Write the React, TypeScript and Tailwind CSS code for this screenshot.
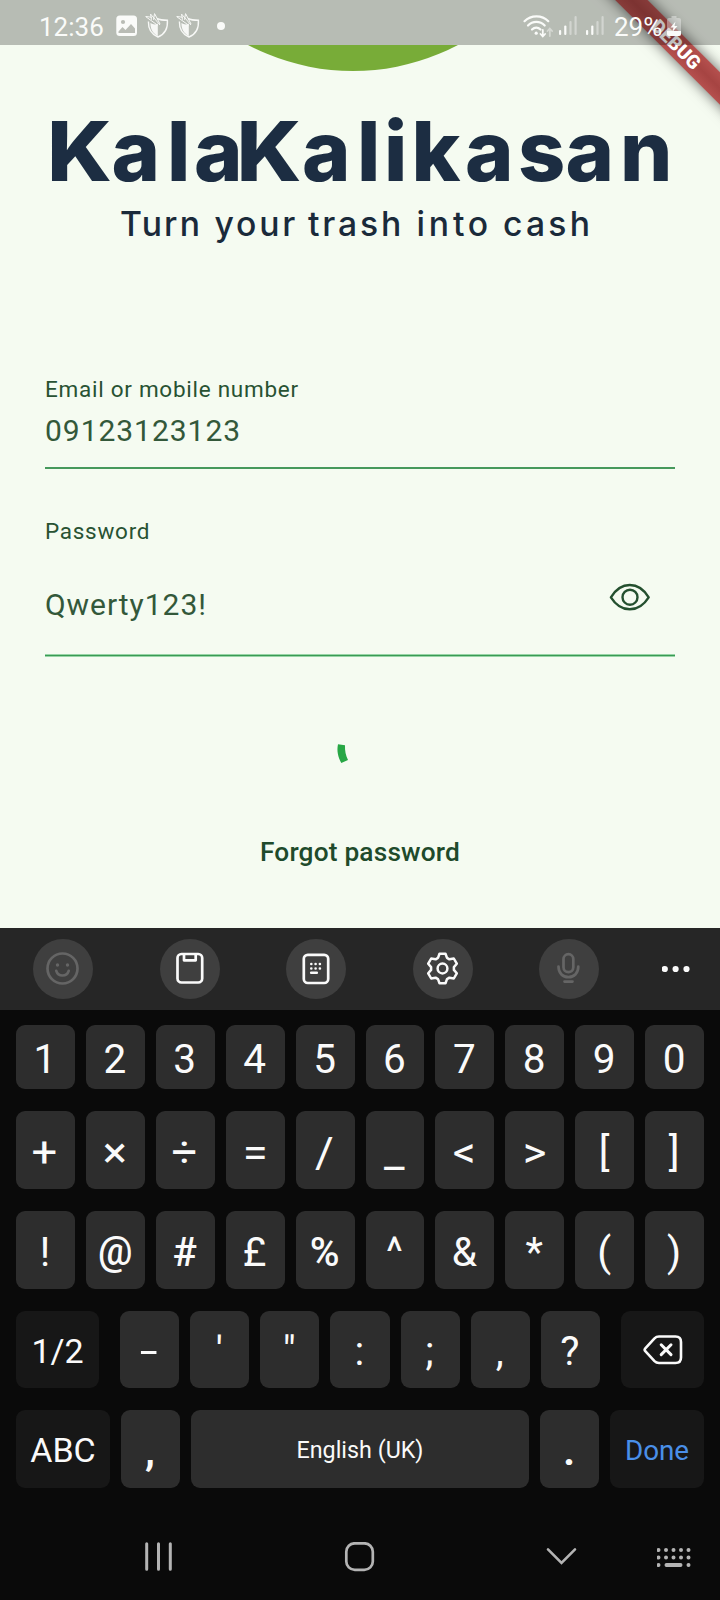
import React from "react";

const shieldIcon = (
  <svg width="24" height="26" viewBox="0 0 24 26" fill="none" stroke="#f7f8f6" strokeWidth="1.4">
    <path d="M12 5.500c2.800 1.400 6 1.800 10.400 1.800 .6 8.700-3.200 14.200-9.400 16.700-6-2.500-9.800-7.500-9.600-15.500" />
    <path d="M12.800 10.500v12.500c-4.800-2.500-7.400-6.500-7.400-13 2.500 1.500 5 2 7.400.5z" fill="#f7f8f6" stroke="none" />
    <path d="M.5 3.500l12.500 9M5.500 1l9.500 11M9.500 .5l5.500 10.500M1 3.500l6 .8M5.500 1.200l1 5.500M9.500 .8l-1 6" strokeWidth="1" />
  </svg>
);

function Signal() {
  return (
    <svg width="18" height="20" viewBox="0 0 18 20" fill="#fafbf9">
      <rect x="0" y="14" width="2.200" height="5" rx="1" />
      <rect x="5.200" y="9.500" width="2.200" height="9.500" rx="1" />
      <rect x="10.400" y="5" width="2.200" height="14" rx="1" opacity=".4" />
      <rect x="15.500" y="0" width="2.200" height="19" rx="1" opacity=".4" />
    </svg>
  );
}

function StatusBar() {
  return (
    <header className="relative z-20 flex h-[45px] shrink-0 items-center bg-black/25 pt-[7px] pl-[39px] text-[26px] leading-[32px] text-[#fafbf9]">
      <span className="mt-[2px] w-[77px]">12:36</span>
      <svg className="mr-[7px]" width="22" height="22" viewBox="0 0 22 22">
        <rect x=".3" y=".5" width="20.700" height="20.500" rx="3.500" fill="#fafbf9" />
        <circle cx="7" cy="7" r="2.100" fill="#b9bcb5" />
        <path d="M2.500 16.500l4-4.500 3 3 5.500-6 4 4.500v4.500h-16.500z" fill="#b9bcb5" />
      </svg>
      <span className="mr-[7px]">{shieldIcon}</span>
      <span>{shieldIcon}</span>
      <span className="ml-[17px] size-[8px] rounded-full bg-[#fafbf9]" />
      <svg className="ml-[297px]" width="32" height="24" viewBox="0 0 32 24" fill="none" stroke="#fafbf9" strokeWidth="2.200" strokeLinecap="round">
        <path d="M2.500 7.200c6.500-6.500 17.500-6.500 23.800 0M6 11.500c4.700-4.800 12-4.800 16.700 0M10 15.500c2.500-2.600 6-2.600 8.500 0" />
        <circle cx="14.200" cy="19.200" r="1.600" fill="#fafbf9" stroke="none" />
        <path d="M20.800 16v6M18.500 20l2.300 2.500 2.300-2.500" strokeWidth="1.800" />
        <path d="M27.800 22v-7M25.500 17l2.300-2.500 2.300 2.500" strokeWidth="1.800" opacity=".45" />
      </svg>
      <span className="ml-[5px]"><Signal /></span>
      <span className="ml-[9px]"><Signal /></span>
      <span className="mt-[2px] ml-[10px] w-[53px] whitespace-nowrap">29%</span>
      <svg width="15" height="21" viewBox="0 0 15 21">
        <path d="M4.500 0h5v2h2.500q2 0 2 2v14q0 2-2 2h-10q-2 0-2-2v-14q0-2 2-2h2.500z" fill="#fff" opacity=".38" />
        <path d="M0 15h14v3q0 2-2 2h-10q-2 0-2-2z" fill="#fafbf9" />
        <path d="M8.500 5.500l-5 6h3l-1.500 5 5.500-6.500h-3z" fill="#fafbf9" />
      </svg>
    </header>
  );
}

function DebugBanner() {
  return (
    <div className="absolute top-[33.200px] left-[575.500px] z-10 flex h-[22.600px] w-[200px] rotate-45 items-center justify-center bg-linear-to-b from-[#b5504e] via-[#a64442] to-[#b5504e] text-[19.100px] leading-none font-black text-white shadow-[0_0_14px_rgba(0,0,0,0.6)]">
      DEBUG
    </div>
  );
}

function Brand() {
  return (
    <svg className="shrink-0" width="720" height="215" viewBox="0 45 720 215" fontFamily="Inter, sans-serif">
      <circle cx="353" cy="-154" r="225" fill="#78ac38" />
      <text y="181" fontSize="82.500" fontWeight="800" fill="#1c2d42">
        <tspan x="47" textLength="65" lengthAdjust="spacingAndGlyphs">K</tspan>
        <tspan x="111.500 167 194">ala</tspan>
        <tspan x="236.500" textLength="65" lengthAdjust="spacingAndGlyphs">K</tspan>
        <tspan x="302 357 384 411.500 465 518 565.500 620">alikasan</tspan>
      </text>
      <text y="236" fontSize="33.700" fontWeight="500" fill="#1a2a3a">
        <tspan x="120" textLength="91">Turn </tspan>
        <tspan x="214.500" textLength="92.500">your </tspan>
        <tspan x="308" textLength="105">trash </tspan>
        <tspan x="416.500" textLength="84.500">into </tspan>
        <tspan x="503" textLength="87">cash</tspan>
      </text>
    </svg>
  );
}

function LoginForm() {
  return (
    <form className="mt-[116px] flex flex-col px-[45px] text-[#285233]">
      <label className="h-[26px] text-[22.500px] leading-[26px] tracking-[0.730px]">Email or mobile number</label>
      <div className="mt-[11px] h-[36px] text-[30px] leading-[36px] tracking-[0.960px] text-[#33583a]">09123123123</div>
      <div className="mt-[18px] h-[2px] bg-[#46995c]" />
      <label className="mt-[49px] h-[26px] text-[22.500px] leading-[26px] tracking-[0.730px]">Password</label>
      <div className="mt-[43px] flex h-[36px] justify-between pr-[24px] text-[30px] leading-[36px] tracking-[0.960px] text-[#33583a]">
        <span>Qwerty123!</span>
        <svg className="-mt-[5px]" width="42" height="30" viewBox="0 0 42 30" fill="none" stroke="#24502f" strokeWidth="2.400" strokeLinejoin="round">
          <path d="M1.900 15.300C7 7 13.500 3 20.800 3s13.800 4 18.900 12.300C34.600 23.300 28 27.300 20.800 27.300S7 23.300 1.900 15.300z" />
          <circle cx="21" cy="15.200" r="7.500" />
        </svg>
      </div>
      <div className="mt-[31px] h-[3px] border-y border-[#97d5a6] bg-[#3a9a54]" />
      <svg className="mx-auto mt-[70px]" width="50" height="50" viewBox="335 727 50 50">
        <path d="M338 744.300L345 745.200C344.800 751 345.700 755 348 760L341.300 763C338 757 336.600 751 338 744.300z" fill="#27a745" />
      </svg>
      <button type="button" className="mx-auto mt-[59px] h-[32px] text-[26.250px] leading-[32px] font-medium tracking-[0.190px] text-[#204a2b]">
        Forgot password
      </button>
    </form>
  );
}

function ToolButton({ children, dim }: { children: React.ReactNode; dim?: boolean }) {
  return (
    <button type="button" className={`size-[60px] shrink-0 rounded-full bg-[#3f3f3f] ${dim ? "text-[#656565]" : "text-[#fafafa]"}`}>
      <svg width="60" height="60" viewBox="0 0 60 60" fill="none" stroke="currentColor" strokeWidth="2.700" strokeLinecap="round" strokeLinejoin="round">
        {children}
      </svg>
    </button>
  );
}

function Toolbar() {
  return (
    <div className="flex h-[82px] shrink-0 items-center gap-[66.500px] bg-[#262626] pl-[33px]">
      <ToolButton dim>
        <circle cx="29.500" cy="29.500" r="15" />
        <path d="M23.300 31.800c1 3.300 3.400 4.700 6.200 4.700s5.200-1.400 6.200-4.700" />
        <circle cx="24.500" cy="26" r="1.700" fill="currentColor" stroke="none" />
        <circle cx="34.500" cy="26" r="1.700" fill="currentColor" stroke="none" />
      </ToolButton>
      <ToolButton>
        <rect x="17.500" y="15" width="24.700" height="28.500" rx="4" />
        <path d="M24 15.500v5.800h11.700v-5.800" />
      </ToolButton>
      <ToolButton>
        <rect x="17.800" y="15.800" width="24.400" height="28.200" rx="4" />
        <path d="M25.300 25h.01M29.600 25h.01M33.900 25h.01M25.300 29.500h.01M29.600 29.500h.01M33.900 29.500h.01M25.200 33.800h5.600" strokeWidth="2.600" />
      </ToolButton>
      <ToolButton>
        <g transform="translate(29.500 29.500)">
          <path d="M-3-14.700H3L4.500-10.600 6.900-9.200 11.300-10 14.300-4.800 11.400-1.400V1.400L14.300 4.800 11.300 10 6.900 9.200 4.500 10.600 3 14.700H-3L-4.500 10.600-6.900 9.200-11.300 10-14.300 4.800-11.400 1.400V-1.400L-14.300-4.800-11.300-10-6.900-9.200-4.500-10.600z" strokeWidth="2.500" />
          <circle r="4.900" strokeWidth="2.500" />
        </g>
      </ToolButton>
      <ToolButton dim>
        <rect x="24.500" y="15.200" width="9.800" height="18" rx="4.900" />
        <path d="M19.500 27.500c0 6.500 4 10.700 9.900 10.700s9.900-4.200 9.900-10.700M25.500 42.600h8" />
      </ToolButton>
      <svg className="-ml-[4px]" width="30" height="8" viewBox="0 0 30 8" fill="#fafafa">
        <circle cx="2.800" cy="4" r="3.100" />
        <circle cx="13.600" cy="4" r="3.100" />
        <circle cx="24.500" cy="4" r="3.100" />
      </svg>
    </div>
  );
}

function Key({ children, className = "" }: { children?: React.ReactNode; className?: string }) {
  return (
    <button type="button" className={`flex items-center justify-center rounded-[9px] bg-[#2d2d2d] pt-[4px] pr-[1px] text-[40.500px] leading-none text-[#fafafa] ${className}`}>
      {children}
    </button>
  );
}

const specialKey =
  "flex items-center justify-center rounded-[9px] bg-[#171717] pt-[2px] text-[34px] leading-none text-[#fafafa]";

function Keyboard() {
  return (
    <section className="flex h-[672px] shrink-0 flex-col bg-[#0a0a0a]">
      <Toolbar />
      <div className="flex flex-col gap-[22px] px-[16px] pt-[15px]">
        <div className="grid h-[64px] grid-cols-10 gap-[11px]">
          {["1", "2", "3", "4", "5", "6", "7", "8", "9", "0"].map((k) => <Key key={k}>{k}</Key>)}
        </div>
        <div className="grid h-[78px] grid-cols-10 gap-[11px]">
          {["+", "×", "÷", "=", "/", "_", "<", ">"].map((k) => (
            <Key key={k}><span className="inline-block scale-x-112 scale-y-105">{k}</span></Key>
          ))}
          {["[", "]"].map((k) => <Key key={k}>{k}</Key>)}
        </div>
        <div className="grid h-[78px] grid-cols-10 gap-[11px]">
          <Key>!</Key>
          <Key className="pb-[2px] font-medium"><span className="inline-block scale-x-95">@</span></Key>
          <Key className="font-medium">#</Key>
          <Key>£</Key>
          <Key className="font-medium">%</Key>
          {["^", "&", "*", "(", ")"].map((k) => <Key key={k}>{k}</Key>)}
        </div>
        <div className="flex h-[77px] justify-between">
          <button type="button" className={`${specialKey} w-[83px]`}>1/2</button>
          <div className="grid w-[480px] grid-cols-7 gap-[11px]">
            <Key><span className="inline-block scale-x-160">-</span></Key>
            {["'", '"', ":", ";", ",", "?"].map((k) => <Key key={k}>{k}</Key>)}
          </div>
          <button type="button" className={`${specialKey} w-[83px]`}>
            <svg className="-mt-[2px]" width="40" height="30" viewBox="0 0 40 30" fill="none" stroke="#fafafa" strokeWidth="2.600" strokeLinecap="round" strokeLinejoin="round">
              <path d="M2.300 13.300L11.500 3.300Q13.300 1.500 16 1.500H32.500Q38 1.500 38 7V22.500Q38 28 32.500 28H16Q13.300 28 11.500 26.200L2.300 16.200Q1 14.750 2.300 13.300z" />
              <path d="M18.200 9.800l9.800 9.800M28 9.800l-9.800 9.800" strokeWidth="3" />
            </svg>
          </button>
        </div>
        <div className="flex h-[78px] gap-[11px]">
          <button type="button" className={`${specialKey} w-[94px]`}>ABC</button>
          <Key className="w-[59px] font-bold">,</Key>
          <button type="button" className="flex flex-1 items-center justify-center rounded-[9px] bg-[#2d2d2d] pt-[4px] text-[23.300px] leading-none text-[#fafafa]">English (UK)</button>
          <Key className="w-[59px] font-bold">.</Key>
          <button type="button" className="flex w-[94px] items-center justify-center rounded-[9px] bg-[#171717] pt-[4px] text-[27.800px] leading-none text-[#4a8fe8]">Done</button>
        </div>
      </div>
      <nav className="mt-[54px] flex h-[30px] items-center pl-[144px] text-[#b4b4b4]">
        <svg width="30" height="30" viewBox="0 0 30 30" stroke="currentColor" strokeWidth="3" strokeLinecap="round">
          <path d="M2.700 1.700v25.500M14.500 1.700v25.500M26.300 1.700v25.500" />
        </svg>
        <svg className="ml-[170px]" width="32" height="30" viewBox="0 0 32 30" fill="none" stroke="currentColor" strokeWidth="2.700">
          <rect x="2.300" y="1.300" width="26.500" height="26.600" rx="8.500" />
        </svg>
        <svg className="ml-[170px]" width="32" height="30" viewBox="0 0 32 30" fill="none" stroke="currentColor" strokeWidth="2.600" strokeLinecap="round">
          <path d="M2 7.300l13.500 13.500 13.500-13.500" />
        </svg>
        <svg className="ml-[79px]" width="36" height="30" viewBox="0 0 36 30" stroke="currentColor" strokeWidth="4" strokeLinecap="round">
          <path d="M1.500 8h.01M9 8h.01M16.500 8h.01M24 8h.01M31.500 8h.01M1.500 15.500h.01M9 15.500h.01M16.500 15.500h.01M24 15.500h.01M31.500 15.500h.01M1.500 23h.01M31.500 23h.01M9.500 23h14" />
        </svg>
      </nav>
    </section>
  );
}

export default function App() {
  return (
    <div className="relative flex h-[1600px] w-[720px] flex-col overflow-hidden bg-[#f5fbf1] font-['Roboto',sans-serif]">
      <DebugBanner />
      <StatusBar />
      <main className="flex h-[883px] shrink-0 flex-col">
        <Brand />
        <LoginForm />
      </main>
      <Keyboard />
    </div>
  );
}
